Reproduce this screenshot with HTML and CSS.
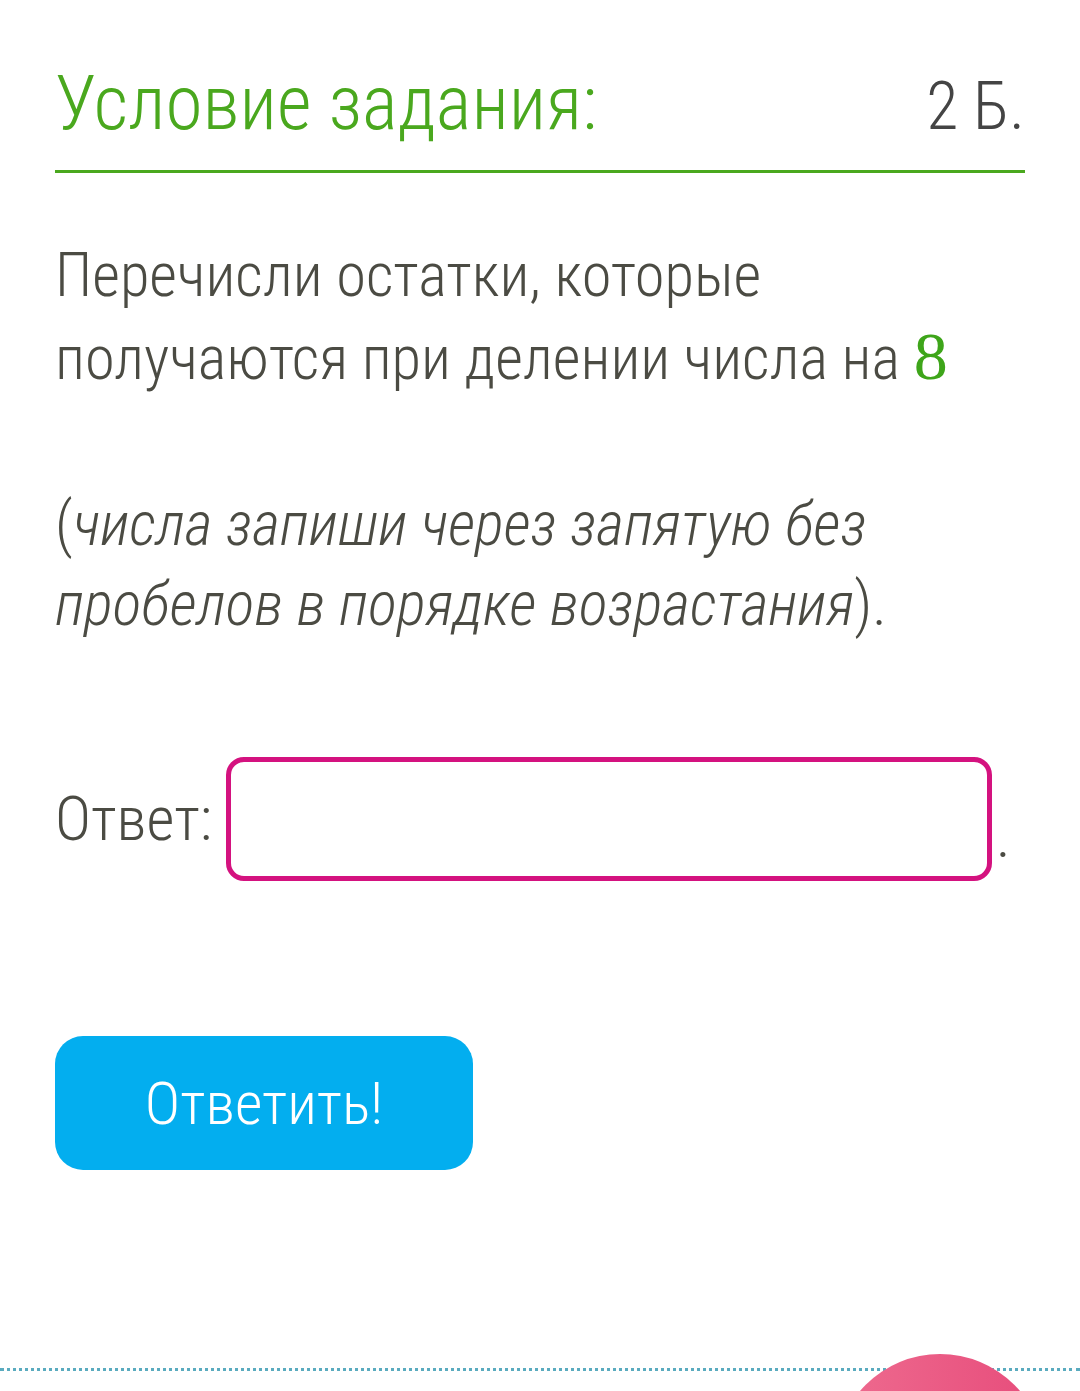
FILE: index.html
```html
<!DOCTYPE html>
<html lang="ru">
<head>
  <meta charset="UTF-8" />
  <meta name="viewport" content="width=device-width, initial-scale=1.0" />
  <title>Условие задания</title>
  <link rel="stylesheet" href="styles.css">
</head>
<body>
  <div class="task">
    <div class="task-head">
      <h1>Условие задания:</h1>
      <span class="points">2 Б.</span>
    </div>

    <p class="question">Перечисли остатки, которые получаются при делении числа на <span class="num">8</span></p>
    <p class="hint">(<i>числа запиши через запятую без пробелов в порядке возрастания</i>).</p>

    <div class="answer">
      <span class="label">Ответ:</span>
      <input class="answer-input" type="text" />
      <span class="dot">.</span>
    </div>

    <button class="btn">Ответить!</button>
  </div>

  <div class="footer-line">
    <div class="help-bubble"></div>
  </div>
</body>
</html>
```

FILE: styles.css
```css
* {
  margin: 0;
  padding: 0;
  box-sizing: border-box;
}
body {
  font-family: 'Roboto Condensed', 'Liberation Sans Narrow', 'DejaVu Sans Condensed', sans-serif;
  font-weight: 300;
  background: #fff;
  color: #4b4b43;
  width: 1080px;
  height: 1391px;
  overflow: hidden;
}
.task {
  padding: 0 55px;
}
.task-head {
  display: flex;
  justify-content: space-between;
  align-items: baseline;
  padding-top: 58px;
  padding-bottom: 22px;
  border-bottom: 3px solid #4aa81e;
}
.task-head h1 {
  font-size: 75.5px;
  font-weight: 300;
  color: #4aa81e;
  line-height: 90px;
}
.points {
  font-size: 66px;
  color: #444;
}
.question {
  font-size: 60.5px;
  line-height: 80px;
  margin-top: 63px;
}
.num {
  font-family: 'Liberation Serif', serif;
  font-weight: 400;
  color: #3ea51a;
  font-size: 68px;
}
.hint {
  font-size: 60.5px;
  line-height: 80px;
  margin-top: 86px;
}
.answer {
  display: flex;
  align-items: center;
  margin-top: 112px;
  font-size: 61px;
}
.answer-input {
  width: 766px;
  height: 124px;
  margin-left: 14px;
  border: 5px solid #d4127f;
  border-radius: 18px;
  outline: none;
  background: #fff;
}
.dot {
  align-self: flex-end;
  line-height: 90px;
  margin-left: 4px;
}
.btn {
  display: block;
  margin-top: 155px;
  width: 418px;
  height: 134px;
  background: #03aeef;
  border: none;
  border-radius: 28px;
  color: #fff;
  font-family: inherit;
  font-weight: 300;
  font-size: 60px;
}
.footer-line {
  position: relative;
  margin-top: 198px;
  border-top: 3px dotted #5aabbf;
}
.help-bubble {
  position: absolute;
  left: 835px;
  top: -17px;
  width: 210px;
  height: 210px;
  border-radius: 50%;
  background: linear-gradient(90deg, #ee6b8f, #e74c7b);
}
```
